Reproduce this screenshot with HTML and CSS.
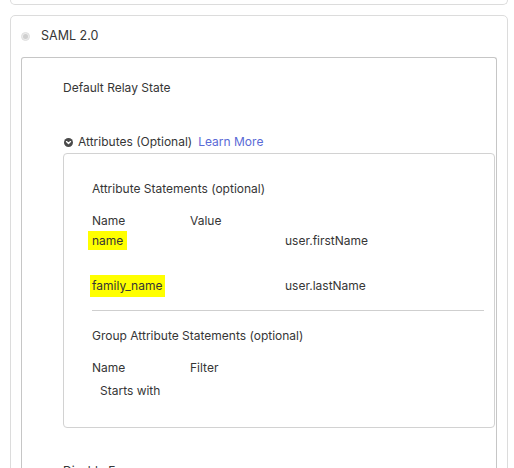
FILE: index.html
```html
<!DOCTYPE html>
<html lang="en">
<head>
    <meta charset="UTF-8">
    <title>SAML 2.0 Settings</title>
    <link rel="stylesheet" href="styles.css">
</head>
<body>
    <div class="page">
        <div class="card-prev"></div>

        <div class="card">
            <div class="card-header">
                <span class="radio"><span class="radio-dot"></span></span>
                <span>SAML 2.0</span>
            </div>

            <div class="saml-box">
                <div class="field-label">Default Relay State</div>

                <div class="attr-toggle">
                    <svg class="chevron" width="9" height="9" viewBox="0 0 10 10">
                        <circle cx="5" cy="5" r="5" fill="#4a4a4a"/>
                        <path d="M2.8 4 L5 6.2 L7.2 4" fill="none" stroke="#fff" stroke-width="1.5" stroke-linecap="round" stroke-linejoin="round"/>
                    </svg>
                    <span>Attributes (Optional)</span>
                    <a class="learn-more" href="#">Learn More</a>
                </div>

                <div class="attr-box">
                    <div class="section-title">Attribute Statements (optional)</div>
                    <div class="row head-row">
                        <span class="col">Name</span>
                        <span class="col">Value</span>
                    </div>
                    <div class="row data-row">
                        <span class="col-name"><mark class="hl">name</mark></span>
                        <span>user.firstName</span>
                    </div>
                    <div class="row data-row second">
                        <span class="col-name"><mark class="hl hl-wide">family_name</mark></span>
                        <span>user.lastName</span>
                    </div>

                    <hr class="divider">

                    <div class="section-title">Group Attribute Statements (optional)</div>
                    <div class="row head-row">
                        <span class="col">Name</span>
                        <span class="col">Filter</span>
                    </div>
                    <div class="row filter-row">Starts with</div>
                </div>

                <div class="force-row">
                    <span class="force-label">Disable Force Authentication</span>
                    <span class="checkbox"></span>
                </div>
            </div>
        </div>
    </div>
</body>
</html>
```

FILE: styles.css
```css
body {
    margin: 0;
    background: #fff;
    font-family: Inter, "Liberation Sans", Arial, sans-serif;
    font-size: 12px;
    color: #363636;
    overflow: hidden;
    height: 468px;
}
.page {
    padding: 0 6px 0 10px;
}
.card-prev {
    height: 4px;
    border: 1px solid #dcdcdc;
    border-top: 0;
    border-radius: 0 0 5px 5px;
}
.card {
    margin-top: 10px;
    border: 1px solid #dcdcdc;
    border-radius: 5px;
    padding: 0 10px;
}
.card-header {
    display: flex;
    align-items: center;
    gap: 11px;
    padding: 10px 0 11px;
    line-height: 20px;
    font-size: 12.5px;
}
.radio {
    width: 9px;
    height: 9px;
    border-radius: 50%;
    background: #ececec;
    border: 1px solid #e0e0e0;
    box-sizing: border-box;
    display: flex;
    align-items: center;
    justify-content: center;
}
.radio-dot {
    width: 5px;
    height: 5px;
    border-radius: 50%;
    background: #cfcfcf;
}
.saml-box {
    border: 1px solid #c6c6c6;
    border-bottom: 0;
    border-radius: 3px 3px 0 0;
    padding: 20px 1px 20px 41px;
    line-height: 20px;
}
.attr-toggle {
    margin-top: 34px;
    display: flex;
    align-items: center;
}
.chevron {
    margin: 0 5px 0 1px;
}
.learn-more {
    color: #5a6ad6;
    text-decoration: none;
    margin-left: 6px;
}
.attr-box {
    margin-top: 1px;
    border: 1px solid #d2d2d2;
    border-radius: 4px;
    padding: 25px 10px 26px 28px;
}
.row {
    display: flex;
}
.head-row {
    margin-top: 12px;
}
.col {
    width: 98px;
}
.col-name {
    width: 193px;
}
.data-row {
    margin-top: 0;
}
.data-row.second {
    margin-top: 25px;
}
.hl {
    background: #ffff00;
    color: #363636;
    padding: 2px 4px 2px 4px;
    margin-left: -4px;
}
.hl-wide {
    padding: 3px 3px 4px 2px;
    margin-left: -2px;
}
.divider {
    border: 0;
    border-top: 1px solid #cfcfcf;
    margin: 14px 0 15px;
}
.filter-row {
    margin-top: 3px;
    padding-left: 8px;
}
.force-row {
    margin-top: 33px;
    display: flex;
    align-items: center;
}
.force-label {
    width: 137px;
}
.checkbox {
    width: 10px;
    height: 10px;
    border: 1px solid #cfcfcf;
    border-radius: 2px;
    background: #f4f4f4;
}
```
